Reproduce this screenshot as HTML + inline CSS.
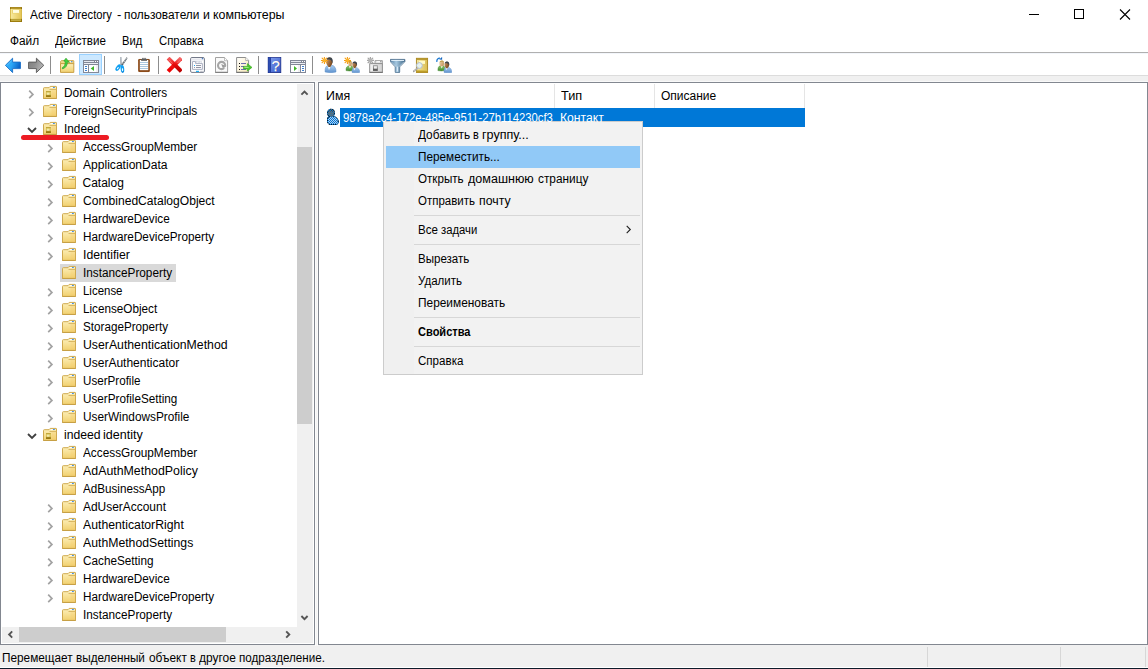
<!DOCTYPE html><html lang="ru"><head><meta charset="utf-8"><title>Active Directory - пользователи и компьютеры</title><style>
html,body{margin:0;padding:0}
body{width:1148px;height:669px;position:relative;overflow:hidden;background:#fff;font:12px/14px "Liberation Sans", "DejaVu Sans", sans-serif;color:#000}
.a{position:absolute}
.t{position:absolute;white-space:pre;line-height:14px;font-size:12px;transform-origin:0 0;display:block}
svg{position:absolute;overflow:visible}
</style></head><body>
<svg width="0" height="0" style="left:0;top:0">
<defs>
<linearGradient id="gFold" x1="0" y1="0" x2="0" y2="1"><stop offset="0" stop-color="#fdf1bd"/><stop offset="1" stop-color="#f1d06e"/></linearGradient>
<linearGradient id="gBlue" x1="0" y1="0" x2="1" y2="0.35"><stop offset="0" stop-color="#35b6ff"/><stop offset=".5" stop-color="#2ba6f6"/><stop offset="1" stop-color="#0a63c8"/></linearGradient>
<linearGradient id="gGray" x1="0" y1="0" x2="1" y2="0.35"><stop offset="0" stop-color="#7e7e7e"/><stop offset=".5" stop-color="#8e8e8e"/><stop offset="1" stop-color="#b4b4b4"/></linearGradient>
<linearGradient id="gHelp" x1="0" y1="0" x2="1" y2="1"><stop offset="0" stop-color="#86a2f0"/><stop offset="1" stop-color="#3357c8"/></linearGradient>
<linearGradient id="gBody" x1="0" y1="0" x2="0" y2="1"><stop offset="0" stop-color="#a8ccee"/><stop offset="1" stop-color="#5f93cf"/></linearGradient>
<linearGradient id="gGreenB" x1="0" y1="0" x2="0" y2="1"><stop offset="0" stop-color="#8fc86c"/><stop offset="1" stop-color="#3f8a2c"/></linearGradient>
<linearGradient id="gFun" x1="0" y1="0" x2="1" y2="0"><stop offset="0" stop-color="#4f7a9e"/><stop offset=".4" stop-color="#a6c8e0"/><stop offset="1" stop-color="#3f6888"/></linearGradient>
<linearGradient id="gGold" x1="0" y1="0" x2="1" y2="0"><stop offset="0" stop-color="#f8ea9e"/><stop offset="1" stop-color="#e4c658"/></linearGradient>
<linearGradient id="gHead" x1="0" y1="0" x2="1" y2="0.6"><stop offset="0" stop-color="#d9a472"/><stop offset="1" stop-color="#7a4a20"/></linearGradient>
<linearGradient id="gHeadL" x1="0" y1="0" x2="1" y2="0.6"><stop offset="0" stop-color="#f2d6b0"/><stop offset="1" stop-color="#c49a62"/></linearGradient>
<linearGradient id="gRedA" x1="0" y1="0" x2="0" y2="1"><stop offset="0" stop-color="#f46a6a"/><stop offset=".45" stop-color="#f01818"/><stop offset="1" stop-color="#ee0000"/></linearGradient>
<linearGradient id="gRedB" x1="0" y1="0" x2="0" y2="1"><stop offset="0" stop-color="#f25c5c"/><stop offset=".45" stop-color="#ea0c0c"/><stop offset="1" stop-color="#b80000"/></linearGradient>
<linearGradient id="gDoc" x1="0" y1="0" x2="1" y2="1"><stop offset="0" stop-color="#ffffff"/><stop offset="1" stop-color="#fae9b6"/></linearGradient>
<linearGradient id="gGFold" x1="0" y1="0" x2="1" y2="0"><stop offset="0" stop-color="#f4f4f4"/><stop offset="1" stop-color="#d2d2d2"/></linearGradient>
<linearGradient id="gFind" x1="0" y1="0" x2="1" y2="0"><stop offset="0" stop-color="#f5e8a4"/><stop offset="1" stop-color="#d9bc50"/></linearGradient>
<linearGradient id="gSq" x1="0" y1="0" x2="0" y2="1"><stop offset="0" stop-color="#a8a8a8"/><stop offset=".5" stop-color="#808080"/><stop offset="1" stop-color="#404040"/></linearGradient>
<linearGradient id="gOu" x1="0" y1="0" x2="0" y2="1"><stop offset="0" stop-color="#a88a22"/><stop offset=".15" stop-color="#d6be50"/><stop offset=".55" stop-color="#dcc860"/><stop offset=".8" stop-color="#9c7c12"/><stop offset="1" stop-color="#876800"/></linearGradient>
<pattern id="pDither" width="2" height="2" patternUnits="userSpaceOnUse"><rect x="0" y="0" width="1" height="1" fill="#0078d7"/><rect x="1" y="1" width="1" height="1" fill="#0078d7"/></pattern>

<symbol id="i-folder" viewBox="0 0 16 16">
 <path d="M1.5 3.5Q1.5 2.7 2.3 2.7H7L8.2 1.4H14Q14.5 1.4 14.5 1.9V13.4H1.5Z" fill="url(#gFold)" stroke="#cfa94e" stroke-width="1"/>
 <rect x="9.5" y="4.9" width="4.5" height="8" fill="#f3c566" opacity=".28"/>
 <path d="M7.5 4.4H14.4" stroke="#d6b25c" stroke-width="1" fill="none"/>
 <path d="M1.2 13.5H14.8" stroke="#c49c40" stroke-width=".8" fill="none"/>
 <rect x="8.9" y="2.1" width="2.1" height="1" fill="#fff"/><rect x="10.9" y="2.1" width="2" height="1" rx=".4" fill="#3a8cf0"/>
</symbol>
<symbol id="i-ou" viewBox="0 0 16 16">
 <path d="M1.5 3.5Q1.5 2.7 2.3 2.7H7L8.2 1.4H14Q14.5 1.4 14.5 1.9V13.4H1.5Z" fill="url(#gFold)" stroke="#cfa94e" stroke-width="1"/>
 <rect x="9.5" y="4.9" width="4.5" height="8" fill="#f3c566" opacity=".28"/>
 <path d="M7.5 4.4H14.4" stroke="#d6b25c" stroke-width="1" fill="none"/>
 <path d="M1.2 13.5H14.8" stroke="#c49c40" stroke-width=".8" fill="none"/>
 <rect x="8.9" y="2.1" width="2.1" height="1" fill="#fff"/><rect x="10.9" y="2.1" width="2" height="1" rx=".4" fill="#3a8cf0"/>
 <rect x="4" y="6" width="4.9" height="5.9" fill="url(#gOu)"/><rect x="4.9" y="7.6" width="2.6" height="2.2" fill="#f4ecb0" opacity=".9"/>
</symbol>
<symbol id="i-title" viewBox="0 0 12 15">
 <rect x="0" y="0" width="12" height="15" fill="#d6b848"/>
 <rect x="0.9" y="1.6" width="10.2" height="10.4" fill="url(#gGold)"/>
 <rect x="0" y="0" width="12" height="1.8" fill="#aa8a20"/>
 <rect x="0" y="0.6" width="1" height="1.2" fill="#8c6c0a"/><rect x="11" y="0.6" width="1" height="1.2" fill="#8c6c0a"/>
 <rect x="0" y="11.9" width="12" height="3.1" fill="#b49a2c"/>
 <rect x="1" y="12.7" width="10" height="1" fill="#c8b44c"/>
 <rect x="0" y="14.1" width="12" height=".9" fill="#9c7a0a"/>
 <rect x="0" y="11.9" width="1" height="3.1" fill="#94740a"/><rect x="11" y="11.9" width="1" height="3.1" fill="#94740a"/>
 <rect x="2.1" y="2.5" width="7.7" height="4.1" fill="#e9d272"/>
 <rect x="3" y="3" width="6" height="2.9" fill="#fffde2"/>
</symbol>
<symbol id="i-back" viewBox="0 0 16 16">
 <path d="M0.4 8.35L7.6 1.2V5.1H15.2Q15.7 5.1 15.7 5.6V11.1Q15.7 11.6 15.2 11.6H7.6V15.6Z" fill="url(#gBlue)" stroke="#1c6fc6" stroke-width=".9" stroke-linejoin="round"/>
 <path d="M2 8.4L7 3.4" stroke="#7fd4ff" stroke-width=".7" fill="none" opacity=".7"/>
</symbol>
<symbol id="i-fwd" viewBox="0 0 16 16">
 <path d="M15.8 8.35L8.4 1.2V5.1H0.9Q0.4 5.1 0.4 5.6V11.1Q0.4 11.6 0.9 11.6H8.4V15.6Z" fill="url(#gGray)" stroke="#565656" stroke-width=".9" stroke-linejoin="round"/>
</symbol>
<symbol id="i-up" viewBox="0 0 16 16">
 <path d="M1.6 4.4L2.4 3.6H14.3Q14.8 3.6 14.8 4.1V7H1.6Z" fill="#f2d98a" stroke="#cda449" stroke-width=".9"/>
 <rect x="10.6" y="4.2" width="1.6" height="1" fill="#fff"/><rect x="12" y="4.2" width="1.4" height="1" fill="#3a8cf0"/>
 <path d="M1.5 6.6H14.8V15.4H1.5Z" fill="url(#gFold)" stroke="#c9a045" stroke-width="1"/>
 <path d="M3 11C5.2 10 6.4 7.6 6.3 4.4L4.8 4L7 1.2L10.4 5.4L8.4 4.8C8.4 8.4 6.8 11 3.6 11.8Z" fill="#43cf3c" stroke="#2ba32a" stroke-width=".7" stroke-linejoin="round"/>
</symbol>
<symbol id="i-tree" viewBox="0 0 16 16" shape-rendering="crispEdges">
 <rect x="0" y="3" width="16" height="13" fill="#838897"/>
 <rect x="1" y="4" width="14" height="1" fill="#e6e9f0"/>
 <rect x="1" y="6" width="14" height="1" fill="#eceef4"/>
 <rect x="12" y="4" width="1" height="1" fill="#fff"/><rect x="14" y="4" width="1" height="1" fill="#fff"/>
 <rect x="11" y="4" width="1" height="1" fill="#838897"/><rect x="13" y="4" width="1" height="1" fill="#838897"/>
 <rect x="1" y="8" width="4" height="7" fill="#fff"/>
 <rect x="6" y="8" width="9" height="7" fill="#fff"/>
 <rect x="13" y="8" width="2" height="7" fill="#f1f1f1"/>
 <rect x="2" y="9" width="2" height="1" fill="#3d7fd0"/><rect x="2" y="11" width="2" height="1" fill="#3d7fd0"/><rect x="2" y="13" width="2" height="1" fill="#3d7fd0"/>
 <path d="M11 9V14L7.7 11.5Z" fill="#3fb52a" shape-rendering="auto"/>
</symbol>
<symbol id="i-action" viewBox="0 0 16 16" shape-rendering="crispEdges">
 <rect x="0" y="3" width="16" height="13" fill="#838897"/>
 <rect x="1" y="4" width="14" height="1" fill="#e6e9f0"/>
 <rect x="1" y="6" width="14" height="1" fill="#eceef4"/>
 <rect x="12" y="4" width="1" height="1" fill="#fff"/><rect x="14" y="4" width="1" height="1" fill="#fff"/>
 <rect x="11" y="4" width="1" height="1" fill="#838897"/><rect x="13" y="4" width="1" height="1" fill="#838897"/>
 <rect x="1" y="8" width="9" height="7" fill="#fff"/>
 <rect x="7.5" y="8" width="2.5" height="7" fill="#f1f1f1"/>
 <rect x="11" y="8" width="4" height="7" fill="#fff"/>
 <rect x="12" y="9" width="2" height="1" fill="#3d7fd0"/><rect x="12" y="11" width="2" height="1" fill="#3d7fd0"/><rect x="12" y="13" width="2" height="1" fill="#3d7fd0"/>
 <path d="M4 9V14L7 11.5Z" fill="#3fb52a" shape-rendering="auto"/>
</symbol>
<symbol id="i-cut" viewBox="0 0 16 16">
 <path d="M5.3 0.1L6.4 0.1L7.3 8.4L5.4 8.6Z" fill="#8e98a2"/>
 <path d="M6.1 0.4L6.9 8" stroke="#d8dee4" stroke-width=".6"/>
 <path d="M11.9 0L12.4 1.4L7.7 8.4L6.2 7.6Z" fill="#596168"/>
 <path d="M11.7 0.9L7.5 7.3" stroke="#f4f6f8" stroke-width=".9" stroke-dasharray="1 1"/>
 <ellipse cx="3.1" cy="10.6" rx="1.9" ry="3.7" transform="rotate(36 3.1 10.6)" fill="#12a0f2"/>
 <ellipse cx="2.8" cy="11.1" rx=".6" ry="1.4" transform="rotate(36 2.8 11.1)" fill="#fff"/>
 <ellipse cx="7.4" cy="11.9" rx="1.8" ry="3.8" transform="rotate(-6 7.4 11.9)" fill="#12a0f2"/>
 <ellipse cx="7.5" cy="12.6" rx=".6" ry="1.6" transform="rotate(-6 7.5 12.6)" fill="#fff"/>
 <path d="M6.4 14.6C7 15.6 8.2 15.6 8.6 14.4" stroke="#0a6cc0" stroke-width=".6" fill="none"/>
</symbol>
<symbol id="i-paste" viewBox="0 0 16 16">
 <rect x="2.2" y="2" width="11.6" height="13" rx="1.2" fill="#824212"/>
 <rect x="2.6" y="2.4" width="10.8" height="12.2" rx="1" fill="none" stroke="#9c5a24" stroke-width=".5"/>
 <rect x="3.8" y="3" width="8.5" height="10.2" fill="#fff"/>
 <g shape-rendering="crispEdges"><rect x="4" y="5" width="8" height="1" fill="#a9c6de"/><rect x="4" y="7" width="8" height="1" fill="#a9c6de"/><rect x="4" y="9" width="8" height="1" fill="#a9c6de"/><rect x="4" y="11" width="8" height="1" fill="#a9c6de"/></g>
 <rect x="5.1" y="2" width="5.9" height="1.8" fill="#5a5a5a"/>
 <rect x="6" y="0.9" width="4.1" height="1.4" fill="#6a6a6a"/>
 <rect x="6.4" y="1.4" width="3.3" height=".6" fill="#a8a8a8"/>
</symbol>
<symbol id="i-del" viewBox="0 0 16 16">
 <path d="M15.25 1.1L2.1 14.4" stroke="url(#gRedA)" stroke-width="4" fill="none"/>
 <path d="M2.1 1.1L15.25 14.4" stroke="url(#gRedB)" stroke-width="4" fill="none"/>
 <path d="M2.6 2.6L6.6 6.6M14.6 2.6L11.4 5.8" stroke="#f88" stroke-width="1.2" fill="none" opacity=".6"/>
</symbol>
<symbol id="i-prop" viewBox="0 0 16 16">
 <rect x="0.6" y="0.5" width="13.8" height="14.9" rx="1.3" fill="#fff" stroke="#737989" stroke-width="1"/>
 <path d="M1.4 2H11.6M1.4 3H13.6" stroke="#d5d9e4" stroke-width=".7"/>
 <rect x="11.8" y="0.9" width="1.4" height="1.4" fill="#4f7fc2"/>
 <path d="M2.5 4.5H5.6V6.5H12.4V12.4H2.5Z" fill="#fcfcfe" stroke="#a4a9bc" stroke-width=".9"/>
 <rect x="6.2" y="4.6" width="2.4" height="1.4" fill="#fff" stroke="#c4c8d6" stroke-width=".5"/><rect x="9.2" y="4.6" width="2.4" height="1.4" fill="#fff" stroke="#c4c8d6" stroke-width=".5"/>
 <g shape-rendering="crispEdges"><rect x="4" y="8" width="1" height="1" fill="#1ea6f2"/><rect x="6" y="8" width="5" height="1" fill="#9296a6"/>
 <rect x="4" y="10" width="1" height="1" fill="#9a9aa6"/><rect x="6" y="10" width="5" height="1" fill="#9296a6"/></g>
 <rect x="6" y="13.8" width="3" height="1.2" fill="#22b0f2"/><rect x="10.2" y="13.8" width="2.6" height="1.2" fill="#c2c4cc"/>
</symbol>
<symbol id="i-refresh" viewBox="0 0 16 16">
 <path d="M1.5 0.5H10.6L13.6 3.6V15.3H1.5Z" fill="#fafafa" stroke="#a2a2a2" stroke-width="1"/>
 <path d="M1.2 15.4H13.9" stroke="#7c7c7c" stroke-width="1"/>
 <path d="M10.5 0.6V3.7H13.5" fill="#fff" stroke="#a2a2a2" stroke-width=".7"/>
 <circle cx="7.6" cy="8.5" r="3.6" fill="none" stroke="#a6a6a6" stroke-width="2.1"/>
 <path d="M7.2 7L10.8 8.4L9 11.4Z" fill="#9a9a9a"/>
 <path d="M10.4 11.2L12.6 10" stroke="#fafafa" stroke-width="1.1"/>
</symbol>
<symbol id="i-export" viewBox="0 0 16 16">
 <path d="M0.6 0.5H9.8L12.6 3.4V15.3H0.6Z" fill="url(#gDoc)" stroke="#8e8e8e" stroke-width="1"/>
 <path d="M0.3 15.4H12.9" stroke="#6e6e6e" stroke-width="1"/>
 <path d="M9.7 0.6V3.5H12.5" fill="#fff" stroke="#9a9a9a" stroke-width=".7"/>
 <g shape-rendering="crispEdges"><rect x="3" y="6" width="1" height="1" fill="#111"/><rect x="3" y="9" width="1" height="1" fill="#111"/><rect x="3" y="12" width="1" height="1" fill="#111"/>
 <rect x="5" y="6" width="5" height="1" fill="#6c6cae"/><rect x="5" y="9" width="3" height="1" fill="#6c6cae"/><rect x="5" y="12" width="5" height="1" fill="#6c6cae"/></g>
 <path d="M7.5 9.4H11.4V6.6L16 10.4L11.4 14V11.9H7.5Z" fill="#4bc62c" stroke="#38a81c" stroke-width=".6" stroke-linejoin="round"/>
 <path d="M8.4 10.5H12.6" stroke="#9be882" stroke-width="1"/>
</symbol>
<symbol id="i-help" viewBox="0 0 16 16">
 <rect x="1.2" y="0.3" width="12.6" height="15.3" fill="url(#gHelp)" stroke="#1a2c86" stroke-width=".8"/>
 <rect x="1.2" y="0.3" width="2.7" height="15.3" fill="#1d3a9c"/>
 <rect x="1.8" y="0.8" width=".8" height="14.4" fill="#3a5cc0"/>
 <text x="9.5" y="14" text-anchor="middle" font-family="Liberation Sans, sans-serif" font-size="14.5" fill="#22327c">?</text>
 <text x="8.8" y="13.6" text-anchor="middle" font-family="Liberation Sans, sans-serif" font-size="14.5" fill="#fff" stroke="#fff" stroke-width=".25">?</text>
</symbol>
<symbol id="i-star" viewBox="0 0 7 7">
 <path d="M3.5 0V7M0 3.5H7M1.2 1.2L5.8 5.8M5.8 1.2L1.2 5.8" stroke="#f59d12" stroke-width="1.05" stroke-linecap="round" fill="none"/>
 <circle cx="3.5" cy="3.5" r="1.7" fill="#fdb62a"/>
</symbol>
<symbol id="i-gstar" viewBox="0 0 7 7">
 <path d="M3.5 0V7M0 3.5H7M1.2 1.2L5.8 5.8M5.8 1.2L1.2 5.8" stroke="#a4a4a4" stroke-width="1.25" stroke-linecap="round" fill="none"/>
 <circle cx="3.5" cy="3.5" r="1.9" fill="#b4b4b4"/>
</symbol>
<symbol id="i-newuser" viewBox="0 0 16 16">
 <path d="M4.1 15C3.9 11.4 4.6 9 7 8.4L10.4 8.2C13.6 8.6 15.2 11 15 15Q10 16.4 4.1 15Z" fill="url(#gBody)" stroke="#5a8cc4" stroke-width=".5"/>
 <path d="M6.8 9L8 13.2L9.6 9Z" fill="#fff"/>
 <rect x="7.2" y="7.6" width="2.4" height="2.4" fill="#8a5424"/>
 <ellipse cx="8.3" cy="4.8" rx="3" ry="4.4" fill="url(#gHead)"/>
 <path d="M5.6 2.6C6.2 -0.4 11 -0.6 11.6 2.8C11.9 4.6 11.6 5.8 11.2 6.6C11 4.4 10.2 3 8.2 2.6C7.2 2.4 6.2 2.4 5.6 2.6Z" fill="#3c444c"/>
 <use href="#i-star" x="-0.1" y="-0.1" width="7" height="7"/>
</symbol>
<symbol id="i-newgroup" viewBox="0 0 16 16">
 <path d="M2 13.6C1.8 10.6 3 9 5 8.8L7.4 8.8C8.6 9 9 10 8.8 13.6Q5.5 14.4 2 13.6Z" fill="url(#gGreenB)" stroke="#3b7f2a" stroke-width=".4"/>
 <path d="M5 9L5.9 11.6L7 9Z" fill="#fff"/>
 <ellipse cx="6.1" cy="6.6" rx="1.9" ry="2.75" fill="url(#gHeadL)"/>
 <path d="M4.3 5.6C4.6 3.4 7.6 3.4 8 5.6C7 4.8 5.4 4.8 4.3 5.6Z" fill="#b89a48"/>
 <path d="M8 15.4C7.8 12.6 8.6 10.8 10 10.4L11.8 10.4C14.2 10.8 15.9 12.4 15.7 15.4Q12 16.2 8 15.4Z" fill="url(#gBody)" stroke="#5a8cc4" stroke-width=".4"/>
 <path d="M9.7 10.8L10.5 13.4L11.5 10.8Z" fill="#fff"/>
 <rect x="9.8" y="9.6" width="1.7" height="1.6" fill="#8a5424"/>
 <ellipse cx="10.6" cy="7.6" rx="2.3" ry="2.8" fill="url(#gHead)"/>
 <path d="M8.5 6.4C8.9 3.8 12.6 3.8 13 6.4C13.2 7.6 13 8.4 12.8 8.8C12.6 7.2 11.8 6.3 10.4 6.2C9.6 6.1 8.9 6.2 8.5 6.4Z" fill="#3c444c"/>
 <use href="#i-star" x="-0.1" y="-0.1" width="7" height="7"/>
</symbol>
<symbol id="i-newou" viewBox="0 0 16 16">
 <path d="M8 3.6H15.4V7H8Z" fill="#e2e2e2" stroke="#9a9a9a" stroke-width=".9"/>
 <rect x="9.6" y="4.2" width="3.4" height="1" fill="#fff"/><rect x="13" y="4.2" width="1.4" height="1" fill="#9a9a9a"/>
 <path d="M2.7 6.6H15.4V15.3H2.7Z" fill="url(#gGFold)" stroke="#8f8f8f" stroke-width="1"/>
 <path d="M2.4 15.4H15.8" stroke="#707070" stroke-width="1"/>
 <rect x="6" y="8.1" width="4.8" height="5.7" fill="url(#gSq)"/><rect x="6.9" y="9.2" width="3" height="2.4" fill="#f0f0f0"/>
 <use href="#i-gstar" x="-0.1" y="-0.1" width="7" height="7"/>
</symbol>
<symbol id="i-filter" viewBox="0 0 16 16">
 <path d="M0.3 2.4H14.9V4.6L9.7 9.8V15Q9.7 15.7 9 15.7H5.9Q5.2 15.7 5.2 15V9.8L0.3 4.6Z" fill="url(#gFun)" stroke="#4a6c8a" stroke-width=".8" stroke-linejoin="round"/>
 <path d="M1.2 3.5H14" stroke="#e8f4fc" stroke-width=".9"/>
 <path d="M1.4 4.9L5.9 9.6M13.8 4.9L9.2 9.6" stroke="#e0eef8" stroke-width=".7" opacity=".8"/>
 <path d="M7.5 9.6V14.6" stroke="#d8e8f4" stroke-width="1"/>
</symbol>
<symbol id="i-find" viewBox="0 0 16 16">
 <rect x="3.4" y="1.3" width="11.2" height="14.2" fill="url(#gFind)" stroke="#a8841c" stroke-width=".9"/>
 <rect x="3.4" y="1.3" width="11.2" height="1.6" fill="#b4942c"/>
 <rect x="3.6" y="13" width="10.8" height="2.3" fill="#bc9c28"/>
 <path d="M3.8 13.4H14.2" stroke="#ecd870" stroke-width=".6"/>
 <rect x="6" y="3.7" width="6" height="3.2" fill="#fffbc8"/>
 <path d="M4.4 11.4L0.6 14.4" stroke="#a0a0a0" stroke-width="1.8" stroke-linecap="round"/>
 <path d="M4.4 11.4L0.6 14.4" stroke="#f4f4f4" stroke-width=".8" stroke-dasharray="0.8 0.8"/>
 <circle cx="6.4" cy="8.5" r="2.9" fill="#e2f0f6" stroke="#b4bec8" stroke-width="1"/>
 <circle cx="6.6" cy="8.9" r="1.4" fill="#eef4d8" opacity=".8"/>
</symbol>
<symbol id="i-addgrp" viewBox="0 0 16 16">
 <path d="M1.9 13.6C1.7 10.6 2.8 9 4.6 8.6L7 8.6C8.4 9 8.9 10 8.7 13.6Q5.4 14.4 1.9 13.6Z" fill="url(#gGreenB)" stroke="#3b7f2a" stroke-width=".4"/>
 <path d="M4.8 9L5.7 11.6L6.8 9Z" fill="#fff"/>
 <ellipse cx="5.7" cy="6.4" rx="2.3" ry="3" fill="url(#gHeadL)"/>
 <path d="M3.5 5.6C3.9 2.8 7.6 2.8 8 5.4C7 4.6 4.8 4.6 3.5 5.6Z" fill="#bea250"/>
 <path d="M8 15.4C7.8 12.6 8.6 10.6 10 10.2L12 10.2C14.4 10.6 16 12.4 15.8 15.4Q12 16.2 8 15.4Z" fill="url(#gBody)" stroke="#5a8cc4" stroke-width=".4"/>
 <path d="M9.9 10.6L10.7 13.2L11.7 10.6Z" fill="#fff"/>
 <rect x="10" y="9.6" width="1.7" height="1.6" fill="#8a5424"/>
 <ellipse cx="10.8" cy="7.7" rx="2.3" ry="2.9" fill="url(#gHead)"/>
 <path d="M8.7 6.4C9.1 3.8 12.8 3.8 13.2 6.4C13.4 7.6 13.2 8.4 13 8.8C12.8 7.2 12 6.3 10.6 6.2C9.8 6.1 9.1 6.2 8.7 6.4Z" fill="#3c444c"/>
 <path d="M0.9 4.8C0.6 2.6 1.8 1.1 4 1.1" stroke="#1a78d2" stroke-width="1.3" fill="none"/>
 <path d="M3.2 2.4L6.1 -0.1V2.8Z" fill="#1466c0"/>
</symbol>
<clipPath id="cContact"><path d="M1 5C1 2.4 2.6 0.8 5 0.8C7.6 0.8 9 2.6 9 5C9 6.6 8.4 7.4 7.8 8C10.6 8.6 13 11.6 13 14.4L11 16.9H3.4L1 14.6V11C1 9.6 2 8.6 2.6 8.2C1.6 7.6 1 6.6 1 5Z"/></clipPath>
<symbol id="i-contact" viewBox="0 0 14 18">
 <g clip-path="url(#cContact)">
  <rect x="0" y="0" width="14" height="18" fill="#101820"/>
  <path d="M2 15.4V11.4C2 9.6 3.6 8.6 6 8.6C9.6 8.6 12 11.4 12 14.4L10.6 16H3.8Z" fill="#b4d0ee"/>
  <ellipse cx="5" cy="5" rx="3" ry="3.4" fill="#96683a"/><path d="M2 4C2.4 1.2 7.6 1.2 8 4.4C6.6 3 3.4 3 2 4Z" fill="#3a3a3a"/>
  <rect x="0" y="0" width="14" height="18" fill="url(#pDither)" shape-rendering="crispEdges"/>
 </g>
</symbol>
</defs>
</svg>

<div class="a" style="left:0px;top:0px;width:1148px;height:52px;background:#fff;"></div>
<div class="a" style="left:0px;top:52px;width:1148px;height:1px;background:#b0b0b0;"></div>
<div class="a" style="left:0px;top:53px;width:1148px;height:1px;background:#f3f6fb;"></div>
<div class="a" style="left:0px;top:54px;width:1148px;height:21px;background:#fff;"></div>
<div class="a" style="left:0px;top:75px;width:1148px;height:594px;background:#f0f0f0;"></div>
<div class="a" style="left:0px;top:75px;width:1148px;height:1px;background:#dcdcdc;"></div>
<div class="a" style="left:0px;top:81px;width:1148px;height:1px;background:#f9f9f9;"></div>
<div class="a" style="left:315px;top:82px;width:1px;height:564px;background:#fbfbfb;"></div>
<div class="a" style="left:317px;top:82px;width:1px;height:564px;background:#fbfbfb;"></div>
<div class="a" style="left:316px;top:82px;width:1px;height:564px;background:#f4f4f4;"></div>
<svg style="left:1020px;top:0" width="128" height="30" viewBox="0 0 128 30" shape-rendering="crispEdges"><path d="M9 14.5h10" stroke="#000" stroke-width="1" fill="none"/><rect x="54.5" y="9.5" width="9" height="9" stroke="#000" fill="none"/><path d="M100 9.5l10 10M110 9.5l-10 10" stroke="#000" stroke-width="1.1" fill="none" shape-rendering="auto"/></svg>
<svg style="left:10px;top:7px" width="12" height="15" viewBox="0 0 12 15"><use href="#i-title"/></svg>
<div class="a" style="left:50px;top:56px;width:1px;height:18px;background:#8d8d8d;"></div>
<div class="a" style="left:104px;top:56px;width:1px;height:18px;background:#8d8d8d;"></div>
<div class="a" style="left:158px;top:56px;width:1px;height:18px;background:#8d8d8d;"></div>
<div class="a" style="left:258px;top:56px;width:1px;height:18px;background:#8d8d8d;"></div>
<div class="a" style="left:312px;top:56px;width:1px;height:18px;background:#8d8d8d;"></div>
<div class="a" style="left:79px;top:54px;width:23px;height:21px;background:#cce8ff;box-sizing:border-box;border:1px solid #99d1ff"></div>
<svg style="left:5px;top:57px" width="16" height="16" viewBox="0 0 16 16"><use href="#i-back"/></svg>
<svg style="left:28px;top:57px" width="16" height="16" viewBox="0 0 16 16"><use href="#i-fwd"/></svg>
<svg style="left:59px;top:57px" width="16" height="16" viewBox="0 0 16 16"><use href="#i-up"/></svg>
<svg style="left:83px;top:57px" width="16" height="16" viewBox="0 0 16 16"><use href="#i-tree"/></svg>
<svg style="left:115px;top:57px" width="16" height="16" viewBox="0 0 16 16"><use href="#i-cut"/></svg>
<svg style="left:136px;top:57px" width="16" height="16" viewBox="0 0 16 16"><use href="#i-paste"/></svg>
<svg style="left:166px;top:57px" width="16" height="16" viewBox="0 0 16 16"><use href="#i-del"/></svg>
<svg style="left:190px;top:57px" width="16" height="16" viewBox="0 0 16 16"><use href="#i-prop"/></svg>
<svg style="left:214px;top:57px" width="16" height="16" viewBox="0 0 16 16"><use href="#i-refresh"/></svg>
<svg style="left:236px;top:57px" width="16" height="16" viewBox="0 0 16 16"><use href="#i-export"/></svg>
<svg style="left:267px;top:57px" width="16" height="16" viewBox="0 0 16 16"><use href="#i-help"/></svg>
<svg style="left:290px;top:57px" width="16" height="16" viewBox="0 0 16 16"><use href="#i-action"/></svg>
<svg style="left:321px;top:57px" width="16" height="16" viewBox="0 0 16 16"><use href="#i-newuser"/></svg>
<svg style="left:344px;top:57px" width="16" height="16" viewBox="0 0 16 16"><use href="#i-newgroup"/></svg>
<svg style="left:367px;top:57px" width="16" height="16" viewBox="0 0 16 16"><use href="#i-newou"/></svg>
<svg style="left:390px;top:57px" width="16" height="16" viewBox="0 0 16 16"><use href="#i-filter"/></svg>
<svg style="left:413px;top:57px" width="16" height="16" viewBox="0 0 16 16"><use href="#i-find"/></svg>
<svg style="left:436px;top:57px" width="16" height="16" viewBox="0 0 16 16"><use href="#i-addgrp"/></svg>
<div class="a" style="left:0px;top:82px;width:315px;height:563px;background:#fff;box-sizing:border-box;border:1px solid #828790"></div>
<div class="a" style="left:297px;top:84px;width:16px;height:559px;background:#f0f0f0;"></div>
<div class="a" style="left:297px;top:147px;width:15px;height:277px;background:#cdcdcd;"></div>
<svg style="left:297px;top:84px" width="16" height="543" viewBox="0 0 16 543"><path d="M4.4 10.7L7.5 7.6L10.6 10.7" stroke="#555" stroke-width="1.9" fill="none"/><path d="M4.4 532L7.5 535.1L10.6 532" stroke="#555" stroke-width="1.9" fill="none"/></svg>
<div class="a" style="left:2px;top:627px;width:295px;height:16px;background:#f0f0f0;"></div>
<div class="a" style="left:19px;top:627px;width:207px;height:15px;background:#cdcdcd;"></div>
<svg style="left:2px;top:627px" width="295" height="16" viewBox="0 0 295 16"><path d="M10.2 4.4L7.1 7.5L10.2 10.6" stroke="#555" stroke-width="1.9" fill="none"/><path d="M284.2 4.4L287.3 7.5L284.2 10.6" stroke="#555" stroke-width="1.9" fill="none"/></svg>
<svg style="left:28.4px;top:89.3px" width="8" height="12" viewBox="0 0 8 12"><path d="M1.2 1.7l3.7 3.7-3.7 3.7" stroke="#a2a2a2" stroke-width="1.7" fill="none"/></svg>
<svg style="left:42px;top:85px" width="16" height="16" viewBox="0 0 16 16"><use href="#i-ou"/></svg>
<svg style="left:28.4px;top:107.3px" width="8" height="12" viewBox="0 0 8 12"><path d="M1.2 1.7l3.7 3.7-3.7 3.7" stroke="#a2a2a2" stroke-width="1.7" fill="none"/></svg>
<svg style="left:42px;top:103px" width="16" height="16" viewBox="0 0 16 16"><use href="#i-folder"/></svg>
<svg style="left:26.8px;top:126.5px" width="12" height="8" viewBox="0 0 12 8"><path d="M1 1l4 4 4-4" stroke="#404040" stroke-width="1.8" fill="none"/></svg>
<svg style="left:42px;top:121px" width="16" height="16" viewBox="0 0 16 16"><use href="#i-ou"/></svg>
<svg style="left:47.4px;top:143.3px" width="8" height="12" viewBox="0 0 8 12"><path d="M1.2 1.7l3.7 3.7-3.7 3.7" stroke="#a2a2a2" stroke-width="1.7" fill="none"/></svg>
<svg style="left:61px;top:139px" width="16" height="16" viewBox="0 0 16 16"><use href="#i-folder"/></svg>
<svg style="left:47.4px;top:161.3px" width="8" height="12" viewBox="0 0 8 12"><path d="M1.2 1.7l3.7 3.7-3.7 3.7" stroke="#a2a2a2" stroke-width="1.7" fill="none"/></svg>
<svg style="left:61px;top:157px" width="16" height="16" viewBox="0 0 16 16"><use href="#i-folder"/></svg>
<svg style="left:47.4px;top:179.3px" width="8" height="12" viewBox="0 0 8 12"><path d="M1.2 1.7l3.7 3.7-3.7 3.7" stroke="#a2a2a2" stroke-width="1.7" fill="none"/></svg>
<svg style="left:61px;top:175px" width="16" height="16" viewBox="0 0 16 16"><use href="#i-folder"/></svg>
<svg style="left:47.4px;top:197.3px" width="8" height="12" viewBox="0 0 8 12"><path d="M1.2 1.7l3.7 3.7-3.7 3.7" stroke="#a2a2a2" stroke-width="1.7" fill="none"/></svg>
<svg style="left:61px;top:193px" width="16" height="16" viewBox="0 0 16 16"><use href="#i-folder"/></svg>
<svg style="left:47.4px;top:215.3px" width="8" height="12" viewBox="0 0 8 12"><path d="M1.2 1.7l3.7 3.7-3.7 3.7" stroke="#a2a2a2" stroke-width="1.7" fill="none"/></svg>
<svg style="left:61px;top:211px" width="16" height="16" viewBox="0 0 16 16"><use href="#i-folder"/></svg>
<svg style="left:47.4px;top:233.3px" width="8" height="12" viewBox="0 0 8 12"><path d="M1.2 1.7l3.7 3.7-3.7 3.7" stroke="#a2a2a2" stroke-width="1.7" fill="none"/></svg>
<svg style="left:61px;top:229px" width="16" height="16" viewBox="0 0 16 16"><use href="#i-folder"/></svg>
<svg style="left:47.4px;top:251.3px" width="8" height="12" viewBox="0 0 8 12"><path d="M1.2 1.7l3.7 3.7-3.7 3.7" stroke="#a2a2a2" stroke-width="1.7" fill="none"/></svg>
<svg style="left:61px;top:247px" width="16" height="16" viewBox="0 0 16 16"><use href="#i-folder"/></svg>
<div class="a" style="left:60px;top:264px;width:116px;height:18px;background:#d9d9d9;"></div>
<svg style="left:61px;top:265px" width="16" height="16" viewBox="0 0 16 16"><use href="#i-folder"/></svg>
<svg style="left:47.4px;top:287.3px" width="8" height="12" viewBox="0 0 8 12"><path d="M1.2 1.7l3.7 3.7-3.7 3.7" stroke="#a2a2a2" stroke-width="1.7" fill="none"/></svg>
<svg style="left:61px;top:283px" width="16" height="16" viewBox="0 0 16 16"><use href="#i-folder"/></svg>
<svg style="left:47.4px;top:305.3px" width="8" height="12" viewBox="0 0 8 12"><path d="M1.2 1.7l3.7 3.7-3.7 3.7" stroke="#a2a2a2" stroke-width="1.7" fill="none"/></svg>
<svg style="left:61px;top:301px" width="16" height="16" viewBox="0 0 16 16"><use href="#i-folder"/></svg>
<svg style="left:47.4px;top:323.3px" width="8" height="12" viewBox="0 0 8 12"><path d="M1.2 1.7l3.7 3.7-3.7 3.7" stroke="#a2a2a2" stroke-width="1.7" fill="none"/></svg>
<svg style="left:61px;top:319px" width="16" height="16" viewBox="0 0 16 16"><use href="#i-folder"/></svg>
<svg style="left:47.4px;top:341.3px" width="8" height="12" viewBox="0 0 8 12"><path d="M1.2 1.7l3.7 3.7-3.7 3.7" stroke="#a2a2a2" stroke-width="1.7" fill="none"/></svg>
<svg style="left:61px;top:337px" width="16" height="16" viewBox="0 0 16 16"><use href="#i-folder"/></svg>
<svg style="left:47.4px;top:359.3px" width="8" height="12" viewBox="0 0 8 12"><path d="M1.2 1.7l3.7 3.7-3.7 3.7" stroke="#a2a2a2" stroke-width="1.7" fill="none"/></svg>
<svg style="left:61px;top:355px" width="16" height="16" viewBox="0 0 16 16"><use href="#i-folder"/></svg>
<svg style="left:47.4px;top:377.3px" width="8" height="12" viewBox="0 0 8 12"><path d="M1.2 1.7l3.7 3.7-3.7 3.7" stroke="#a2a2a2" stroke-width="1.7" fill="none"/></svg>
<svg style="left:61px;top:373px" width="16" height="16" viewBox="0 0 16 16"><use href="#i-folder"/></svg>
<svg style="left:47.4px;top:395.3px" width="8" height="12" viewBox="0 0 8 12"><path d="M1.2 1.7l3.7 3.7-3.7 3.7" stroke="#a2a2a2" stroke-width="1.7" fill="none"/></svg>
<svg style="left:61px;top:391px" width="16" height="16" viewBox="0 0 16 16"><use href="#i-folder"/></svg>
<svg style="left:47.4px;top:413.3px" width="8" height="12" viewBox="0 0 8 12"><path d="M1.2 1.7l3.7 3.7-3.7 3.7" stroke="#a2a2a2" stroke-width="1.7" fill="none"/></svg>
<svg style="left:61px;top:409px" width="16" height="16" viewBox="0 0 16 16"><use href="#i-folder"/></svg>
<svg style="left:26.8px;top:432.5px" width="12" height="8" viewBox="0 0 12 8"><path d="M1 1l4 4 4-4" stroke="#404040" stroke-width="1.8" fill="none"/></svg>
<svg style="left:42px;top:427px" width="16" height="16" viewBox="0 0 16 16"><use href="#i-ou"/></svg>
<svg style="left:61px;top:445px" width="16" height="16" viewBox="0 0 16 16"><use href="#i-folder"/></svg>
<svg style="left:61px;top:463px" width="16" height="16" viewBox="0 0 16 16"><use href="#i-folder"/></svg>
<svg style="left:61px;top:481px" width="16" height="16" viewBox="0 0 16 16"><use href="#i-folder"/></svg>
<svg style="left:47.4px;top:503.3px" width="8" height="12" viewBox="0 0 8 12"><path d="M1.2 1.7l3.7 3.7-3.7 3.7" stroke="#a2a2a2" stroke-width="1.7" fill="none"/></svg>
<svg style="left:61px;top:499px" width="16" height="16" viewBox="0 0 16 16"><use href="#i-folder"/></svg>
<svg style="left:47.4px;top:521.3px" width="8" height="12" viewBox="0 0 8 12"><path d="M1.2 1.7l3.7 3.7-3.7 3.7" stroke="#a2a2a2" stroke-width="1.7" fill="none"/></svg>
<svg style="left:61px;top:517px" width="16" height="16" viewBox="0 0 16 16"><use href="#i-folder"/></svg>
<svg style="left:47.4px;top:539.3px" width="8" height="12" viewBox="0 0 8 12"><path d="M1.2 1.7l3.7 3.7-3.7 3.7" stroke="#a2a2a2" stroke-width="1.7" fill="none"/></svg>
<svg style="left:61px;top:535px" width="16" height="16" viewBox="0 0 16 16"><use href="#i-folder"/></svg>
<svg style="left:47.4px;top:557.3px" width="8" height="12" viewBox="0 0 8 12"><path d="M1.2 1.7l3.7 3.7-3.7 3.7" stroke="#a2a2a2" stroke-width="1.7" fill="none"/></svg>
<svg style="left:61px;top:553px" width="16" height="16" viewBox="0 0 16 16"><use href="#i-folder"/></svg>
<svg style="left:47.4px;top:575.3px" width="8" height="12" viewBox="0 0 8 12"><path d="M1.2 1.7l3.7 3.7-3.7 3.7" stroke="#a2a2a2" stroke-width="1.7" fill="none"/></svg>
<svg style="left:61px;top:571px" width="16" height="16" viewBox="0 0 16 16"><use href="#i-folder"/></svg>
<svg style="left:47.4px;top:593.3px" width="8" height="12" viewBox="0 0 8 12"><path d="M1.2 1.7l3.7 3.7-3.7 3.7" stroke="#a2a2a2" stroke-width="1.7" fill="none"/></svg>
<svg style="left:61px;top:589px" width="16" height="16" viewBox="0 0 16 16"><use href="#i-folder"/></svg>
<svg style="left:61px;top:607px" width="16" height="16" viewBox="0 0 16 16"><use href="#i-folder"/></svg>
<div class="a" style="left:21px;top:135px;width:88px;height:5px;background:#ed1c24;border-radius:2.5px"></div>
<div class="a" style="left:318px;top:82px;width:830px;height:563px;background:#fff;box-sizing:border-box;border:1px solid #828790"></div>
<div class="a" style="left:554px;top:84px;width:1px;height:24px;background:#e5e5e5;"></div>
<div class="a" style="left:654px;top:84px;width:1px;height:24px;background:#e5e5e5;"></div>
<div class="a" style="left:804px;top:84px;width:1px;height:24px;background:#e5e5e5;"></div>
<div class="a" style="left:340px;top:108px;width:465px;height:19px;background:#0078d7;"></div>
<svg style="left:326px;top:108px" width="14" height="18" viewBox="0 0 14 18"><use href="#i-contact"/></svg>
<div class="a" style="left:927px;top:647px;width:1px;height:20px;background:#d7d7d7;"></div>
<div class="a" style="left:1060px;top:647px;width:1px;height:20px;background:#d7d7d7;"></div>
<div class="a" style="left:1145px;top:647px;width:1px;height:20px;background:#d7d7d7;"></div>
<div class="a" style="left:0px;top:667px;width:1148px;height:1px;background:#fff;"></div>
<div class="a" style="left:0px;top:668px;width:1148px;height:1px;background:#0d1b2a;"></div>
<div class="a" style="left:383px;top:121px;width:260px;height:254px;background:#f2f2f2;box-sizing:border-box;border:1px solid #cccccc"></div>
<div class="a" style="left:384px;top:122px;width:30px;height:252px;background:#f0f0f0;"></div>
<div class="a" style="left:386px;top:146px;width:254px;height:22px;background:#91c9f7;"></div>
<div class="a" style="left:414px;top:215px;width:226px;height:1px;background:#d7d7d7;"></div>
<div class="a" style="left:414px;top:244px;width:226px;height:1px;background:#d7d7d7;"></div>
<div class="a" style="left:414px;top:317px;width:226px;height:1px;background:#d7d7d7;"></div>
<div class="a" style="left:414px;top:346px;width:226px;height:1px;background:#d7d7d7;"></div>
<svg style="left:624px;top:224px" width="10" height="12" viewBox="0 0 10 12"><path d="M2.7 1.9l3.6 3.6-3.6 3.6" stroke="#202020" stroke-width="1.1" fill="none"/></svg>
<div><span class="t" style="left:29.5px;top:8.2px;color:#000;transform:scaleX(0.9882)">Active</span> <span class="t" style="left:66.9px;top:8.2px;color:#000;transform:scaleX(0.9330)">Directory</span> <span class="t" style="left:116.5px;top:8.2px;color:#000;transform:scaleX(1.0777)">-</span> <span class="t" style="left:124.4px;top:8.2px;color:#000;transform:scaleX(0.9901)">пользователи</span> <span class="t" style="left:203.1px;top:8.2px;color:#000;transform:scaleX(1.0256)">и</span> <span class="t" style="left:213.1px;top:8.2px;color:#000;transform:scaleX(1.0340)">компьютеры</span></div>
<div><span class="t" style="left:10.0px;top:34.0px;color:#000;transform:scaleX(0.9867)">Файл</span></div>
<div><span class="t" style="left:55.1px;top:34.0px;color:#000;transform:scaleX(0.9653)">Действие</span></div>
<div><span class="t" style="left:122.0px;top:34.0px;color:#000;transform:scaleX(0.9303)">Вид</span></div>
<div><span class="t" style="left:158.5px;top:34.0px;color:#000;transform:scaleX(0.9450)">Справка</span></div>
<div><span class="t" style="left:63.7px;top:86.0px;color:#000;transform:scaleX(0.9911)">Domain</span> <span class="t" style="left:109.7px;top:86.0px;color:#000;transform:scaleX(0.9831)">Controllers</span></div>
<div><span class="t" style="left:63.7px;top:104.0px;color:#000;transform:scaleX(0.9788)">ForeignSecurityPrincipals</span></div>
<div><span class="t" style="left:63.7px;top:122.0px;color:#000;transform:scaleX(0.9847)">Indeed</span></div>
<div><span class="t" style="left:82.5px;top:140.0px;color:#000;transform:scaleX(0.9835)">AccessGroupMember</span></div>
<div><span class="t" style="left:82.5px;top:158.0px;color:#000;transform:scaleX(1.0062)">ApplicationData</span></div>
<div><span class="t" style="left:82.5px;top:176.0px;color:#000;transform:scaleX(1.0000)">Catalog</span></div>
<div><span class="t" style="left:82.5px;top:194.0px;color:#000;transform:scaleX(1.0074)">CombinedCatalogObject</span></div>
<div><span class="t" style="left:82.5px;top:212.0px;color:#000;transform:scaleX(0.9778)">HardwareDevice</span></div>
<div><span class="t" style="left:82.5px;top:230.0px;color:#000;transform:scaleX(0.9784)">HardwareDeviceProperty</span></div>
<div><span class="t" style="left:82.5px;top:248.0px;color:#000;transform:scaleX(1.0193)">Identifier</span></div>
<div><span class="t" style="left:82.5px;top:266.0px;color:#000;transform:scaleX(0.9818)">InstanceProperty</span></div>
<div><span class="t" style="left:82.5px;top:284.0px;color:#000;transform:scaleX(0.9549)">License</span></div>
<div><span class="t" style="left:82.5px;top:302.0px;color:#000;transform:scaleX(0.9757)">LicenseObject</span></div>
<div><span class="t" style="left:82.5px;top:320.0px;color:#000;transform:scaleX(0.9728)">StorageProperty</span></div>
<div><span class="t" style="left:82.5px;top:338.0px;color:#000;transform:scaleX(1.0220)">UserAuthenticationMethod</span></div>
<div><span class="t" style="left:82.5px;top:356.0px;color:#000;transform:scaleX(1.0019)">UserAuthenticator</span></div>
<div><span class="t" style="left:82.5px;top:374.0px;color:#000;transform:scaleX(0.9686)">UserProfile</span></div>
<div><span class="t" style="left:82.5px;top:392.0px;color:#000;transform:scaleX(0.9755)">UserProfileSetting</span></div>
<div><span class="t" style="left:82.5px;top:410.0px;color:#000;transform:scaleX(0.9850)">UserWindowsProfile</span></div>
<div><span class="t" style="left:63.6px;top:428.0px;color:#000;transform:scaleX(1.0168)">indeed</span> <span class="t" style="left:102.8px;top:428.0px;color:#000;transform:scaleX(1.0446)">identity</span></div>
<div><span class="t" style="left:82.5px;top:446.0px;color:#000;transform:scaleX(0.9835)">AccessGroupMember</span></div>
<div><span class="t" style="left:82.5px;top:464.0px;color:#000;transform:scaleX(1.0307)">AdAuthMethodPolicy</span></div>
<div><span class="t" style="left:82.5px;top:482.0px;color:#000;transform:scaleX(0.9715)">AdBusinessApp</span></div>
<div><span class="t" style="left:82.5px;top:500.0px;color:#000;transform:scaleX(0.9951)">AdUserAccount</span></div>
<div><span class="t" style="left:82.5px;top:518.0px;color:#000;transform:scaleX(1.0209)">AuthenticatorRight</span></div>
<div><span class="t" style="left:82.5px;top:536.0px;color:#000;transform:scaleX(1.0206)">AuthMethodSettings</span></div>
<div><span class="t" style="left:82.5px;top:554.0px;color:#000;transform:scaleX(0.9793)">CacheSetting</span></div>
<div><span class="t" style="left:82.5px;top:572.0px;color:#000;transform:scaleX(0.9778)">HardwareDevice</span></div>
<div><span class="t" style="left:82.5px;top:590.0px;color:#000;transform:scaleX(0.9784)">HardwareDeviceProperty</span></div>
<div><span class="t" style="left:82.5px;top:608.0px;color:#000;transform:scaleX(0.9818)">InstanceProperty</span></div>
<div><span class="t" style="left:325.7px;top:89.0px;color:#000;transform:scaleX(1.0308)">Имя</span></div>
<div><span class="t" style="left:561.2px;top:89.0px;color:#000;transform:scaleX(1.0606)">Тип</span></div>
<div><span class="t" style="left:660.9px;top:89.0px;color:#000;transform:scaleX(1.0009)">Описание</span></div>
<div><span class="t" style="left:342.5px;top:111.0px;color:#fff;transform:scaleX(0.9408)">9878a2c4-172e-485e-9511-27b114230cf3</span></div>
<div><span class="t" style="left:560.3px;top:111.0px;color:#fff;transform:scaleX(1.0115)">Контакт</span></div>
<div><span class="t" style="left:2.2px;top:651.0px;color:#000;transform:scaleX(0.9833)">Перемещает</span> <span class="t" style="left:76.4px;top:651.0px;color:#000;transform:scaleX(0.9763)">выделенный</span> <span class="t" style="left:149.3px;top:651.0px;color:#000;transform:scaleX(0.9904)">объект</span> <span class="t" style="left:190.1px;top:651.0px;color:#000;transform:scaleX(0.9065)">в</span> <span class="t" style="left:198.9px;top:651.0px;color:#000;transform:scaleX(0.9960)">другое</span> <span class="t" style="left:239.1px;top:651.0px;color:#000;transform:scaleX(0.9696)">подразделение.</span></div>
<div><span class="t" style="left:418.0px;top:128.0px;color:#000;transform:scaleX(0.9820)">Добавить</span> <span class="t" style="left:473.2px;top:128.0px;color:#000;transform:scaleX(0.9065)">в</span> <span class="t" style="left:482.2px;top:128.0px;color:#000;transform:scaleX(1.0463)">группу...</span></div>
<div><span class="t" style="left:417.8px;top:150.0px;color:#000;transform:scaleX(0.9794)">Переместить...</span></div>
<div><span class="t" style="left:418.3px;top:172.0px;color:#000;transform:scaleX(0.9676)">Открыть</span> <span class="t" style="left:467.9px;top:172.0px;color:#000;transform:scaleX(1.0451)">домашнюю</span> <span class="t" style="left:537.5px;top:172.0px;color:#000;transform:scaleX(0.9865)">страницу</span></div>
<div><span class="t" style="left:418.3px;top:194.0px;color:#000;transform:scaleX(0.9573)">Отправить</span> <span class="t" style="left:478.9px;top:194.0px;color:#000;transform:scaleX(1.0244)">почту</span></div>
<div><span class="t" style="left:417.8px;top:223.0px;color:#000;transform:scaleX(0.9630)">Все</span> <span class="t" style="left:440.6px;top:223.0px;color:#000;transform:scaleX(0.9409)">задачи</span></div>
<div><span class="t" style="left:417.8px;top:252.0px;color:#000;transform:scaleX(0.9614)">Вырезать</span></div>
<div><span class="t" style="left:418.2px;top:274.0px;color:#000;transform:scaleX(0.9603)">Удалить</span></div>
<div><span class="t" style="left:417.8px;top:296.0px;color:#000;transform:scaleX(0.9902)">Переименовать</span></div>
<div><span class="t" style="left:418.4px;top:325.0px;color:#000;font-weight:bold;transform:scaleX(0.9207)">Свойства</span></div>
<div><span class="t" style="left:418.2px;top:354.0px;color:#000;transform:scaleX(0.9643)">Справка</span></div>
</body></html>
